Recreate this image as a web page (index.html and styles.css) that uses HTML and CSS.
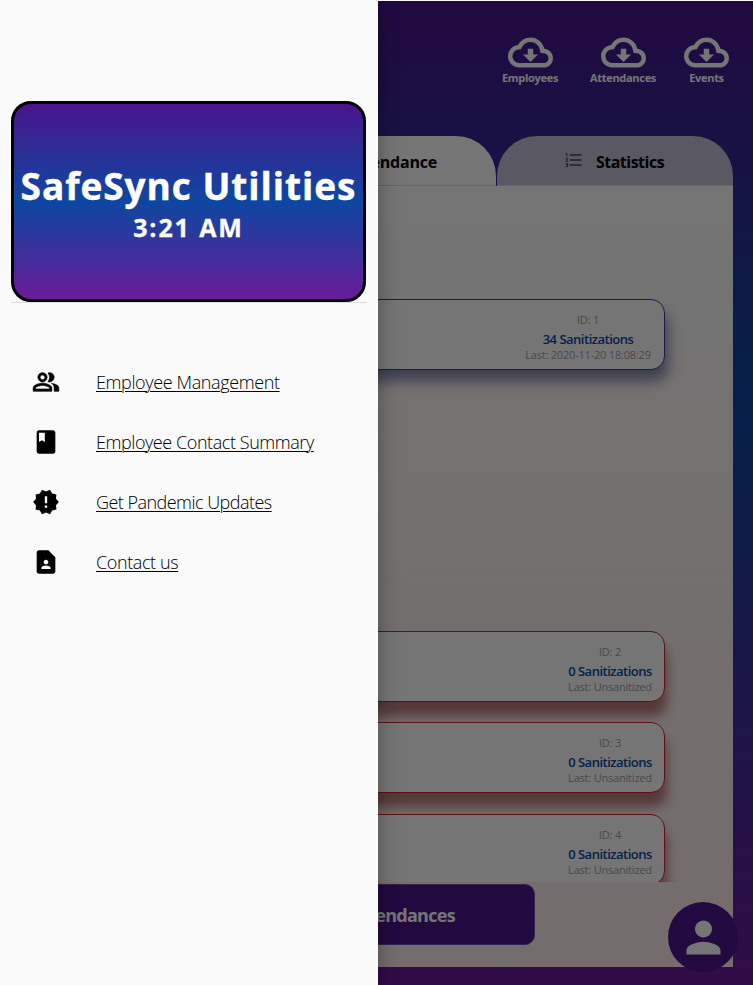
FILE: index.html
```html
<!DOCTYPE html>
<html lang="en">
<head>
<meta charset="utf-8">
<title>SafeSync Utilities</title>
<link rel="stylesheet" href="styles.css">
</head>
<body>
<svg class="defs" width="0" height="0">
  <symbol id="cloud" viewBox="0 0 24 24"><path d="M19.35 10.04C18.67 6.59 15.64 4 12 4 9.11 4 6.6 5.64 5.35 8.04 2.34 8.36 0 10.91 0 14c0 3.31 2.69 6 6 6h13c2.76 0 5-2.24 5-5 0-2.64-2.05-4.78-4.65-4.96zM19 17.600H6c-2 0-3.600-1.600-3.600-3.600 0-1.850 1.350-3.370 3.160-3.570l1.300-.14.6-1.120C8.380 7.400 10.080 6.400 12 6.400c2.430 0 4.500 1.700 5 4.100l.35 1.780 1.800.13c1.370.1 2.450 1.220 2.450 2.590 0 1.430-1.170 2.600-2.600 2.600zm-5.550-7.600h-2.900v3H8l4 4 4-4h-2.550z"/></symbol>
</svg>
<div class="app">
  <header class="actions">
    <div class="action employees"><svg><use href="#cloud"/></svg><span>Employees</span></div>
    <div class="action attendances"><svg><use href="#cloud"/></svg><span>Attendances</span></div>
    <div class="action events"><svg><use href="#cloud"/></svg><span>Events</span></div>
  </header>
  <nav class="tabs">
    <div class="tab active"><span>Attendance</span></div>
    <div class="tab">
      <svg viewBox="0 0 24 24"><path d="M2 17h2v.5H3v1h1v.5H2v1h3v-4H2v1zm1-9h1V4H2v1h1v3zm-1 3h1.800L2 13.100v.9h3v-1H3.200L5 10.900V10H2v1zm5-6v2h14V5H7zm0 14h14v-2H7v2zm0-6h14v-2H7v2z"/></svg>
      <span>Statistics</span>
    </div>
  </nav>
  <main class="panel">
    <div class="list">
      <article class="card clean"><div class="info wide"><p class="id">ID: 1</p><p class="count">34 Sanitizations</p><p class="last">Last: 2020-11-20 18:08:29</p></div></article>
      <article class="card"><div class="info"><p class="id">ID: 2</p><p class="count">0 Sanitizations</p><p class="last">Last: Unsanitized</p></div></article>
      <article class="card"><div class="info"><p class="id">ID: 3</p><p class="count">0 Sanitizations</p><p class="last">Last: Unsanitized</p></div></article>
      <article class="card"><div class="info"><p class="id">ID: 4</p><p class="count">0 Sanitizations</p><p class="last">Last: Unsanitized</p></div></article>
    </div>
    <div class="submit"><span>Attendances</span></div>
  </main>
  <div class="fab"><svg viewBox="0 0 24 24"><path d="M12 12c2.210 0 4-1.790 4-4s-1.790-4-4-4-4 1.790-4 4 1.790 4 4 4zm0 2c-2.670 0-8 1.340-8 4v2h16v-2c0-2.660-5.330-4-8-4z"/></svg></div>
</div>
<div class="scrim"></div>
<aside class="drawer">
  <div class="banner"><h1>SafeSync Utilities</h1><p>3:21 AM</p></div>
  <ul class="menu">
    <li><svg class="people" viewBox="0 0 24 24"><path d="M16.670 13.130C18.040 14.060 19 15.320 19 17v3h4v-3c0-2.180-3.570-3.470-6.330-3.870zM15 12c2.210 0 4-1.790 4-4s-1.790-4-4-4c-.47 0-.91.1-1.330.24C14.500 5.270 15 6.580 15 8s-.5 2.730-1.330 3.760c.42.14.86.24 1.330.24zM9 12c2.210 0 4-1.790 4-4s-1.790-4-4-4-4 1.790-4 4 1.790 4 4 4zm0-6c1.100 0 2 .9 2 2s-.9 2-2 2-2-.9-2-2 .9-2 2-2zm0 7c-2.670 0-8 1.340-8 4v3h16v-3c0-2.660-5.330-4-8-4zm6 5H3v-.990C3.200 16.290 6.300 15 9 15s5.800 1.290 6 2v1z"/></svg><a class="m1">Employee Management</a></li>
    <li><svg viewBox="0 0 24 24"><path d="M18 2H6c-1.100 0-2 .9-2 2v16c0 1.100.9 2 2 2h12c1.100 0 2-.9 2-2V4c0-1.100-.9-2-2-2zM6 4h5v8l-2.500-1.500L6 12V4z"/></svg><a class="m2">Employee Contact Summary</a></li>
    <li><svg viewBox="0 0 24 24"><path d="M23 12l-2.440-2.780.34-3.680-3.610-.82-1.890-3.180L12 3 8.600 1.540 6.710 4.720l-3.610.81.34 3.680L1 12l2.440 2.780-.34 3.690 3.610.82 1.890 3.180L12 21l3.400 1.460 1.890-3.180 3.610-.82-.34-3.680L23 12zm-10 5h-2v-2h2v2zm0-4h-2V7h2v6z"/></svg><a class="m3">Get Pandemic Updates</a></li>
    <li><svg viewBox="0 0 24 24"><path d="M14 2H6c-1.100 0-1.990.9-1.990 2L4 20c0 1.100.89 2 1.990 2H18c1.100 0 2-.9 2-2V8l-6-6zm-2 8c1.100 0 2 .9 2 2s-.9 2-2 2-2-.9-2-2 .9-2 2-2zm4 8H8v-.57c0-.81.48-1.530 1.220-1.850a6.950 6.950 0 0 1 5.560 0A2.010 2.010 0 0 1 16 17.430V18z"/></svg><a class="m4">Contact us</a></li>
  </ul>
</aside>
</body>
</html>
```
FILE: styles.css
```css
* { box-sizing: border-box; }
body { margin: 0; width: 753px; height: 985px; position: relative; overflow: hidden; font-family: "Open Sans", "Noto Sans", sans-serif; }
p, h1, ul { margin: 0; padding: 0; }
span, p, h1, a { white-space: nowrap; }
.defs { position: absolute; }
.app { width: 753px; height: 985px; border-top: 1px solid #fafafa; background: linear-gradient(#4a148c, #0d47a1 40%, #6a1b9a); }
.actions { height: 135px; padding: 29px 20px 0 0; display: flex; justify-content: flex-end; }
.action { display: flex; flex-direction: column; align-items: center; color: #fff; font-size: 11px; font-weight: 700; line-height: 14px; letter-spacing: -.3px; }
.action svg { width: 45px; height: 45px; fill: #fff; }
.action span { margin-top: -4px; }
.employees { width: 66px; margin-right: 22px; }
.attendances { width: 76px; margin-right: 23px; }
.events { width: 45px; margin-right: 4px; }
.tabs { display: flex; gap: 1px; height: 50px; width: 733px; }
.tab { flex: 0 0 236px; height: 50px; border-radius: 40px 40px 0 0; background: #c5c2d8; border-bottom: 1px solid #ddd; display: flex; align-items: center; justify-content: center; font-size: 16px; font-weight: 700; letter-spacing: -.5px; padding: 2px 2px 0 0; }
.tab svg { width: 20px; height: 20px; fill: #444; margin: -3px 12px 0 0; }
.tab.active { flex: 1; background: #fff; justify-content: flex-end; padding-right: 59px; letter-spacing: -.2px; }
.panel { width: 733px; height: 781px; background: linear-gradient(#fff, #fdfbfb 15%, #fbf1ef 55%, #ffebee); }
.list { height: 696px; padding-top: 113px; overflow: hidden; }
.card { width: 645px; height: 71px; margin: 0 0 20.300px 20px; background: #fff; border: 1.500px solid #c62828; border-radius: 14px; box-shadow: 2px 14px 12px 0 rgba(150, 60, 60, .65); display: flex; justify-content: flex-end; padding: 11px 12px 0 0; position: relative; }
.card.clean { border-color: #303f9f; margin-bottom: 261px; box-shadow: 4px 12px 14px -1px rgba(70, 70, 130, .65); }
.info { width: 84px; text-align: center; }
.info.wide { width: 128px; }
.id, .last { color: #9e9e9e; font-size: 11px; line-height: 17px; letter-spacing: -.2px; }
.count { color: #0d47a1; font-size: 13px; font-weight: 600; line-height: 22px; letter-spacing: -.5px; }
.last { line-height: 9px; }
.submit { width: 335px; height: 61px; margin: 2px 0 0 200px; border-radius: 10px; background: #4a148c; border: 1px solid #7148a6; color: #fff; font-size: 18px; font-weight: 700; letter-spacing: -.7px; display: flex; align-items: center; justify-content: flex-end; padding-right: 79px; }
.fab { position: absolute; left: 668px; top: 902px; width: 70px; height: 70px; border-radius: 50%; background: #4a148c; display: flex; align-items: center; justify-content: center; }
.fab svg { width: 51px; height: 51px; fill: #fff; }
.scrim { position: absolute; inset: 1px 0 0; background: rgba(0, 0, 0, .54); }
.drawer { position: absolute; left: 0; top: 1px; width: 378px; height: 984px; background: #fafafa; padding: 100px 12px 0 11px; box-shadow: 0 4px 20px rgba(0, 0, 0, .35); clip-path: inset(0 -40px 0 0); }
.banner { width: 355px; height: 201px; border: 3px solid #000; border-radius: 20px; background: linear-gradient(#4a148c, #0d47a1 50%, #6a1b9a); color: #fff; text-align: center; padding-top: 55px; display: flex; flex-direction: column; align-items: center; }
.banner h1 { font-size: 37px; line-height: 54px; font-weight: 700; letter-spacing: .95px; -webkit-text-stroke: .4px #fff; }
.banner p { font-size: 25px; line-height: 28px; font-weight: 700; letter-spacing: 1.900px; -webkit-text-stroke: .3px #fff; }
.menu { list-style: none; padding-top: 49px; border-top: 1px solid #ddd; }
.menu li { height: 60px; display: flex; align-items: center; padding-left: 21px; }
.menu svg { width: 28px; height: 28px; margin-right: 36px; }
.menu .people { stroke: #000; stroke-width: .5px; }
.menu a { font-size: 18px; font-weight: 300; color: #000; padding-bottom: 1px; text-decoration: underline; text-underline-offset: 2px; text-decoration-thickness: 1px; }
.m1 { letter-spacing: -.38px; }
.m2 { letter-spacing: -.43px; }
.m3 { letter-spacing: -.53px; }
.m4 { letter-spacing: -.4px; }
```
